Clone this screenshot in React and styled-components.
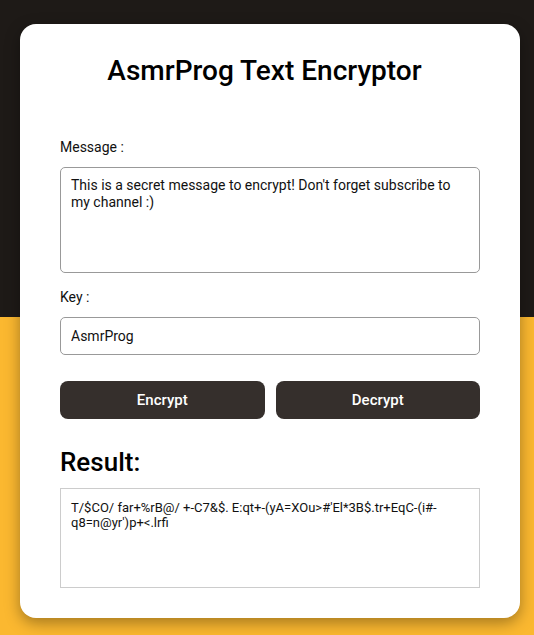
import React, { useState } from 'react';
import styled, { createGlobalStyle } from 'styled-components';

const GlobalStyle = createGlobalStyle`
  * {
    box-sizing: border-box;
  }
  html, body {
    margin: 0;
    padding: 0;
    height: 100%;
  }
  body {
    font-family: Roboto, 'Liberation Sans', sans-serif;
    background: linear-gradient(to bottom, #1e1a17 50%, #fbb830 50%);
  }
  #root {
    height: 100%;
  }
`;

const Page = styled.div`
  min-height: 100%;
  padding: 24px 14px 17px 20px;
  display: flex;
`;

const Card = styled.div`
  width: 500px;
  flex-shrink: 0;
  background: #fff;
  border-radius: 16px;
  padding: 30px 40px 30px;
  box-shadow: 0 5px 15px rgba(0, 0, 0, 0.35);
`;

const Title = styled.h1`
  margin: 0 0 51px;
  padding-right: 11px;
  text-align: center;
  font-size: 28px;
  font-weight: 500;
  line-height: 34px;
  color: #000;
`;

const Label = styled.label`
  display: block;
  font-size: 14px;
  line-height: 16px;
  color: #111;
  margin-bottom: 12px;
`;

const TextArea = styled.textarea`
  display: block;
  width: 100%;
  height: 106px;
  padding: 9px 10px;
  font-family: inherit;
  font-size: 14px;
  line-height: 17px;
  color: #111;
  border: 1px solid #999;
  border-radius: 5px;
  resize: none;
  outline: none;
  margin-bottom: 16px;
`;

const Input = styled.input`
  display: block;
  width: 100%;
  height: 38px;
  padding: 0 10px;
  font-family: inherit;
  font-size: 14px;
  color: #111;
  border: 1px solid #999;
  border-radius: 5px;
  outline: none;
  margin-bottom: 26px;
`;

const Buttons = styled.div`
  display: flex;
  gap: 11px;
  margin-bottom: 28px;
`;

const Button = styled.button`
  flex: 1;
  height: 38px;
  border: none;
  border-radius: 8px;
  background: #352f2c;
  color: #fff;
  font-family: inherit;
  font-size: 15px;
  font-weight: 500;
  cursor: pointer;
`;

const ResultTitle = styled.h2`
  margin: 0 0 11px;
  font-size: 26px;
  font-weight: 500;
  line-height: 30px;
  color: #000;
`;

const ResultBox = styled.div`
  height: 100px;
  padding: 11px 10px;
  border: 1px solid #ccc;
  font-size: 13px;
  line-height: 15px;
  color: #111;
  word-break: break-word;
`;

const App = () => {
  const [message, setMessage] = useState(
    "This is a secret message to encrypt! Don't forget subscribe to my channel :)"
  );
  const [key, setKey] = useState('AsmrProg');

  return (
    <>
      <GlobalStyle />
      <Page>
        <Card>
          <Title>AsmrProg Text Encryptor</Title>
          <Label>Message :</Label>
          <TextArea value={message} onChange={(e) => setMessage(e.target.value)} />
          <Label>Key :</Label>
          <Input value={key} onChange={(e) => setKey(e.target.value)} />
          <Buttons>
            <Button>Encrypt</Button>
            <Button>Decrypt</Button>
          </Buttons>
          <ResultTitle>Result:</ResultTitle>
          <ResultBox>{"T/$CO/ far+%rB@/ +-C7&$. E:qt+-(yA=XOu>#'El*3B$.tr+EqC-(i#-q8=n@yr')p+<.lrfi"}</ResultBox>
        </Card>
      </Page>
    </>
  );
};

export default App;
